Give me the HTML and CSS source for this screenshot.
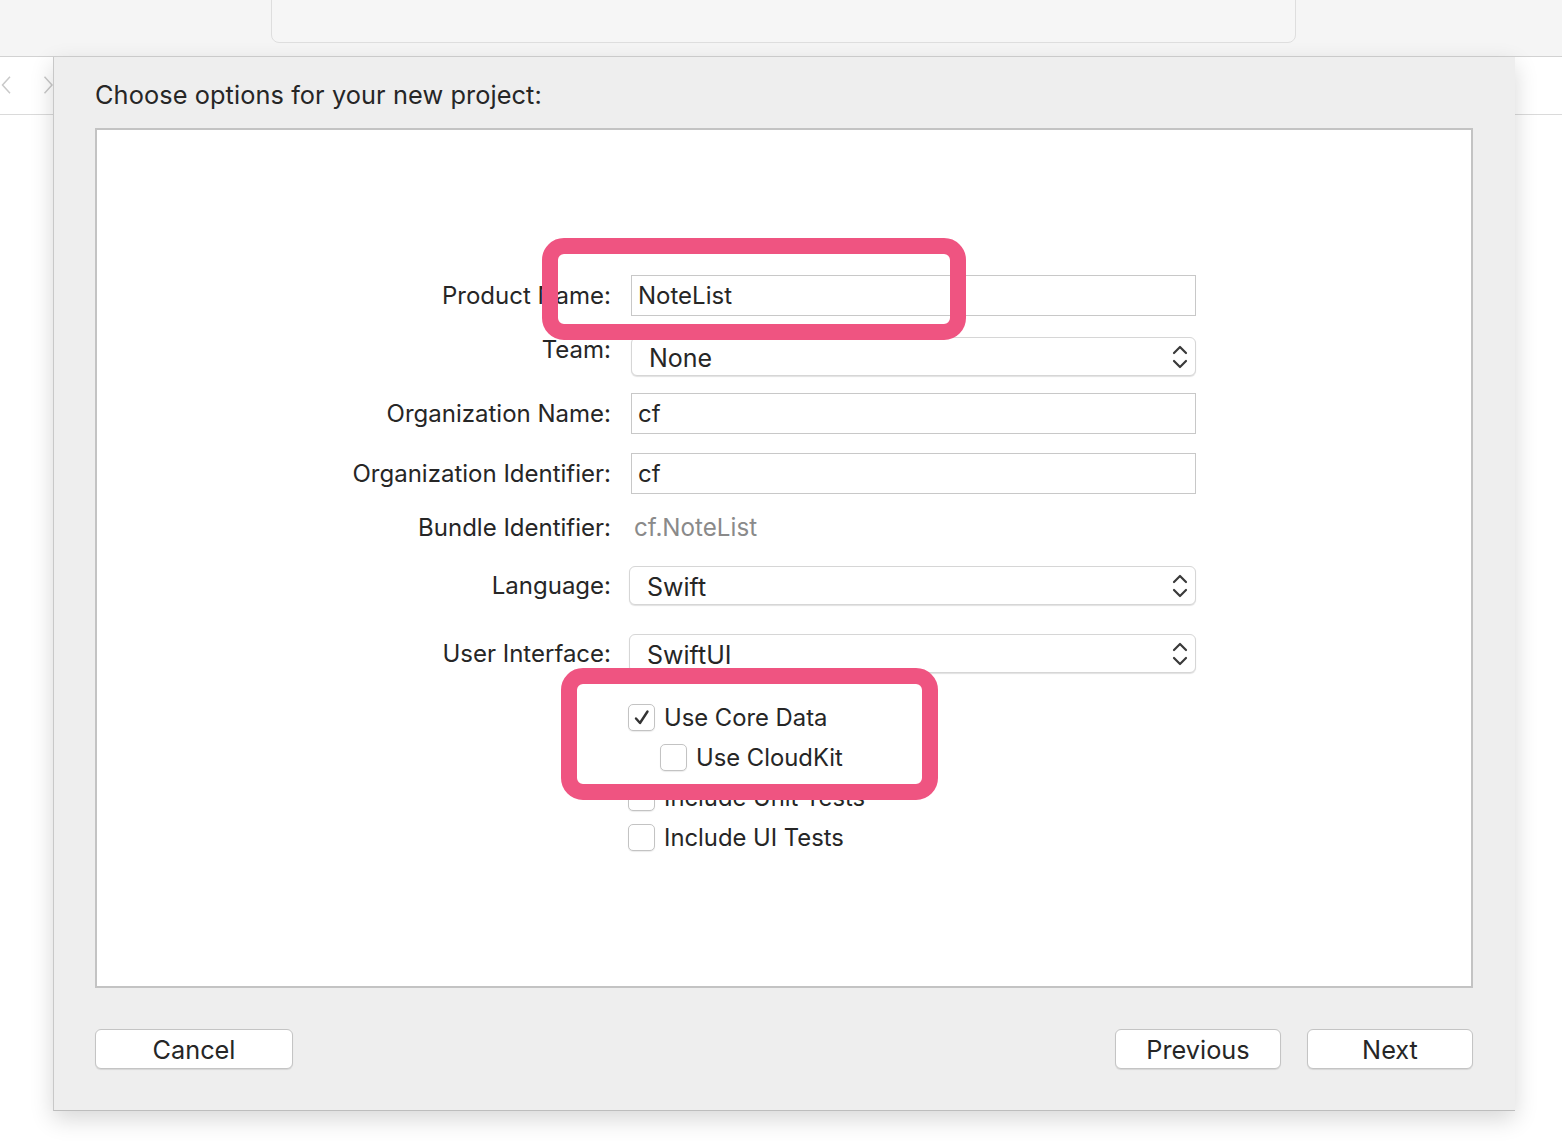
FILE: index.html
```html
<!DOCTYPE html>
<html lang="en">
<head>
  <meta charset="UTF-8">
  <title>Choose options for your new project</title>
  <link rel="stylesheet" href="styles.css">
</head>
<body>
  <div class="toolbar">
    <div class="search"></div>
  </div>

  <div class="window">
    <div class="side side-left">
      <div class="nav">
        <svg class="chev" width="14" height="26" viewBox="0 0 14 26"><path d="M12 2 L2 13 L12 24" fill="none" stroke="#c9c9c9" stroke-width="2"/></svg>
        <svg class="chev" width="14" height="26" viewBox="0 0 14 26"><path d="M2 2 L12 13 L2 24" fill="none" stroke="#c9c9c9" stroke-width="2"/></svg>
      </div>
    </div>

    <div class="sheet">
      <h1 class="sheet-title">Choose options for your new project:</h1>

      <div class="panel">
        <div class="form">
          <div class="row r-name">
            <label>Product Name:</label>
            <div class="field">NoteList</div>
          </div>
          <div class="row r-team">
            <label class="lift">Team:</label>
            <div class="popup">None
              <svg class="updown" width="16" height="26" viewBox="0 0 16 26"><path d="M2 9 L8 3 L14 9 M2 17 L8 23 L14 17" fill="none" stroke="#3a3a3a" stroke-width="2.2" stroke-linecap="round" stroke-linejoin="round"/></svg>
            </div>
          </div>
          <div class="row r-org">
            <label>Organization Name:</label>
            <div class="field">cf</div>
          </div>
          <div class="row r-orgid">
            <label>Organization Identifier:</label>
            <div class="field">cf</div>
          </div>
          <div class="row r-bundle">
            <label>Bundle Identifier:</label>
            <div class="value">cf.NoteList</div>
          </div>
          <div class="row r-lang">
            <label>Language:</label>
            <div class="popup popup-wide">Swift
              <svg class="updown" width="16" height="26" viewBox="0 0 16 26"><path d="M2 9 L8 3 L14 9 M2 17 L8 23 L14 17" fill="none" stroke="#3a3a3a" stroke-width="2.2" stroke-linecap="round" stroke-linejoin="round"/></svg>
            </div>
          </div>
          <div class="row r-ui">
            <label>User Interface:</label>
            <div class="popup popup-wide">SwiftUI
              <svg class="updown" width="16" height="26" viewBox="0 0 16 26"><path d="M2 9 L8 3 L14 9 M2 17 L8 23 L14 17" fill="none" stroke="#3a3a3a" stroke-width="2.2" stroke-linecap="round" stroke-linejoin="round"/></svg>
            </div>
          </div>

          <div class="checks">
            <div class="check">
              <span class="box">
                <svg width="18" height="18" viewBox="0 0 18 18"><path d="M3 9.5 L7 14 L14.5 2.5" fill="none" stroke="#333" stroke-width="2.4" stroke-linecap="round" stroke-linejoin="round"/></svg>
              </span>
              Use Core Data
            </div>
            <div class="check indent">
              <span class="box"></span>
              Use CloudKit
            </div>
            <div class="check">
              <span class="box"></span>
              Include Unit Tests
            </div>
            <div class="check">
              <span class="box"></span>
              Include UI Tests
            </div>
          </div>
        </div>

        <div class="mark mark-name"></div>
        <div class="mark mark-data"></div>
      </div>

      <div class="buttons">
        <button class="btn btn-cancel">Cancel</button>
        <div class="btn-group">
          <button class="btn">Previous</button>
          <button class="btn">Next</button>
        </div>
      </div>
    </div>

    <div class="side side-right"></div>
  </div>
</body>
</html>
```

FILE: styles.css
```css
body {
  margin: 0;
  background-color: #ffffff;
  font-family: Inter, 'Noto Sans', sans-serif;
  color: #262626;
  overflow: hidden;
}
.toolbar {
  height: 56px;
  background-color: #f5f5f5;
  border-bottom: 1px solid #d2d2d2;
  overflow: hidden;
}
.search {
  margin: -10px 0 0 271px;
  width: 1023px;
  height: 51px;
  border: 1px solid #dedede;
  border-radius: 8px;
  background-color: #f6f6f6;
}
.window {
  display: flex;
  height: 1085px;
}
.side {
  background-color: #ffffff;
}
.side-left {
  width: 53px;
  flex-shrink: 0;
}
.side-right {
  flex: 1;
}
.nav {
  display: flex;
  gap: 31px;
  padding: 15px 0 0 1px;
  height: 42px;
  border-bottom: 1px solid #dadada;
}
.side-right::before {
  content: '';
  display: block;
  height: 57px;
  border-bottom: 1px solid #dadada;
}
.sheet {
  box-sizing: border-box;
  width: 1462px;
  height: 1054px;
  flex-shrink: 0;
  background-color: #eeeeee;
  border-left: 1px solid #c8c8c8;
  border-bottom: 1px solid #bdbdbd;
  padding: 0 42px 0 41px;
  box-shadow: 0 8px 22px rgba(0, 0, 0, 0.16);
  position: relative;
  z-index: 1;
}
.sheet-title {
  margin: 0;
  padding-top: 22px;
  height: 49px;
  font-size: 25.3px;
  font-weight: 400;
  letter-spacing: 0.1px;
}
.panel {
  position: relative;
  height: 856px;
  background-color: #ffffff;
  border: 2px solid #c3c3c3;
}
.form {
  padding-top: 145px;
  font-size: 24px;
}
.row {
  display: grid;
  grid-template-columns: 514px 565px;
  column-gap: 20px;
  align-items: center;
}
.row label {
  text-align: right;
}
.row .lift {
  align-self: start;
  margin-top: -2px;
}
.field {
  height: 39px;
  border: 1px solid #c8c8c8;
  background-color: #ffffff;
  padding-left: 6px;
  line-height: 39px;
  font-size: 24px;
}
.popup {
  position: relative;
  height: 37px;
  border: 1px solid #d6d6d6;
  border-radius: 6px;
  box-shadow: 0 1px 1px rgba(0, 0, 0, 0.12);
  background-color: #ffffff;
  padding-left: 17px;
  line-height: 40px;
  font-size: 25px;
}
.popup-wide {
  margin-left: -2px;
}
.updown {
  position: absolute;
  right: 7px;
  top: 6px;
}
.value {
  color: #8a8a8a;
  padding-left: 3px;
  font-size: 24.2px;
}
.r-name {
  height: 41px;
}
.r-team {
  height: 39px;
  margin-top: 21px;
}
.r-org {
  height: 41px;
  margin-top: 17px;
}
.r-orgid {
  height: 41px;
  margin-top: 19px;
}
.r-bundle {
  height: 30px;
  margin-top: 18px;
}
.r-lang {
  height: 39px;
  margin-top: 24px;
}
.r-ui {
  height: 39px;
  margin-top: 29px;
}
.checks {
  display: flex;
  flex-direction: column;
  gap: 13px;
  margin: 31px 0 0 531px;
}
.check {
  display: flex;
  align-items: center;
  gap: 9px;
  height: 27px;
  font-size: 23.8px;
}
.check.indent {
  margin-left: 32px;
}
.box {
  width: 25px;
  height: 25px;
  border: 1px solid #c3c3c3;
  border-radius: 5px;
  background-color: #ffffff;
  box-shadow: 0 1px 1px rgba(0, 0, 0, 0.08);
  display: flex;
  align-items: center;
  justify-content: center;
}
.mark {
  position: absolute;
  border: 16px solid #ef5481;
  border-radius: 22px;
  box-sizing: border-box;
}
.mark-name {
  left: 445px;
  top: 108px;
  width: 424px;
  height: 102px;
}
.mark-data {
  left: 464px;
  top: 538px;
  width: 377px;
  height: 132px;
}
.buttons {
  display: flex;
  justify-content: space-between;
  margin-top: 41px;
}
.btn-group {
  display: flex;
  gap: 26px;
}
.btn {
  height: 40px;
  width: 166px;
  border: 1px solid #c4c4c4;
  border-radius: 6px;
  background-color: #ffffff;
  box-shadow: 0 1px 1px rgba(0, 0, 0, 0.1);
  font-family: Inter, 'Noto Sans', sans-serif;
  font-size: 25.3px;
  color: #262626;
  padding: 0;
}
.btn-cancel {
  width: 198px;
}
```
